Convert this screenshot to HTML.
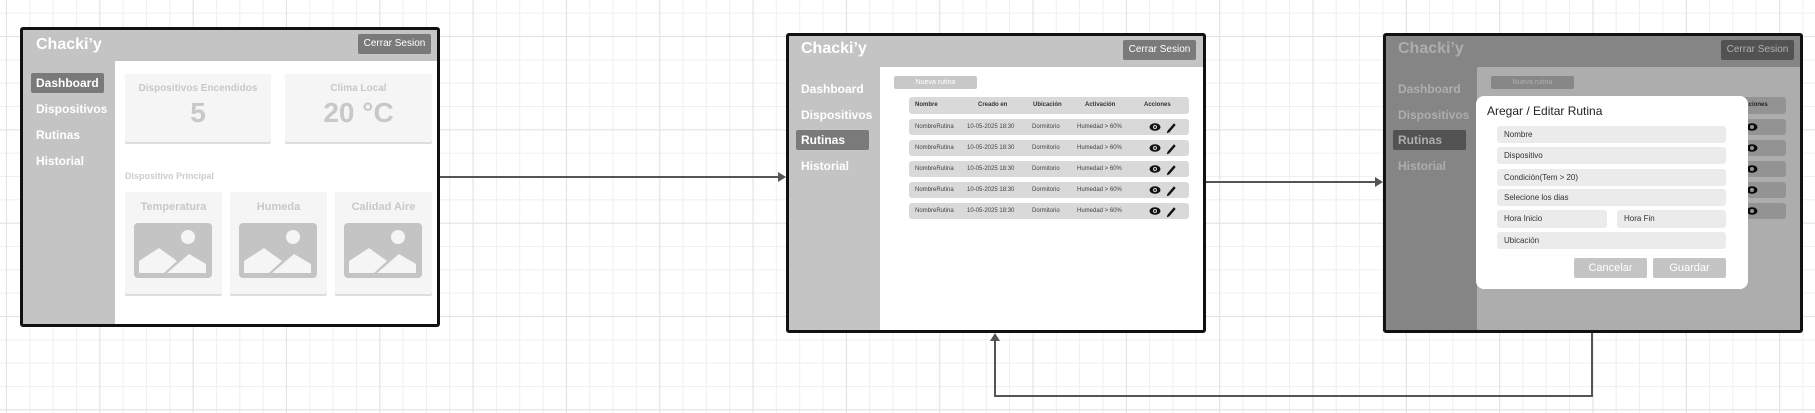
<!DOCTYPE html>
<html><head><meta charset="utf-8"><style>
*{margin:0;padding:0;box-sizing:border-box}
body{width:1815px;height:413px;overflow:hidden;position:relative;font-family:"Liberation Sans",sans-serif;
background-color:#fff;
background-image:
linear-gradient(90deg,#e2e2e2 1px,transparent 1px),
linear-gradient(0deg,#e2e2e2 1px,transparent 1px),
linear-gradient(90deg,#efefef 1px,transparent 1px),
linear-gradient(0deg,#efefef 1px,transparent 1px);
background-size:93.33px 93.33px,93.33px 93.33px,23.33px 23.33px,23.33px 23.33px;
background-position:6px 0,0 37px,6px 0,0 37px;}
.a{position:absolute}
.frame{position:absolute;border:3px solid #111;border-radius:3px;overflow:hidden;background:#fff}
.hdr{position:absolute;left:0;top:0;right:0;background:#c4c4c4}
.side{position:absolute;left:0;bottom:0;background:#c4c4c4}
.logo{position:absolute;color:#fff;font-weight:bold;font-size:16px}
.btn{position:absolute;background:#7a7a7a;color:#fff;font-size:10px;text-align:center;border-radius:2px}
.nav{position:absolute;color:#fff;font-size:12px;font-weight:bold}
.navact{position:absolute;background:#7a7a7a;border-radius:2px}
.card{position:absolute;background:#f5f5f5;box-shadow:0 2px 0 #ddd;border-radius:2px;text-align:center;color:#c8c8c8;font-weight:bold}
.img{position:absolute;left:9px;top:31px;width:78px;height:55px;background:#c4c4c4;border-radius:4px}
.row{position:absolute;left:120px;width:280px;height:16px;background:#d9d9d9;border-radius:3px;font-size:6px;color:#444}
.row span{position:absolute;top:5px;white-space:nowrap}
.fld{position:absolute;background:#ebebeb;border-radius:3px;font-size:8px;color:#333;padding-left:7px;line-height:17px}
</style></head><body>

<!-- arrows -->
<div class="a" style="left:440px;top:176px;width:340px;height:2px;background:#555"></div>
<div class="a" style="left:778px;top:172px;width:0;height:0;border-left:8px solid #555;border-top:5px solid transparent;border-bottom:5px solid transparent"></div>
<div class="a" style="left:1205px;top:181px;width:172px;height:2px;background:#555"></div>
<div class="a" style="left:1375px;top:177px;width:0;height:0;border-left:8px solid #555;border-top:5px solid transparent;border-bottom:5px solid transparent"></div>
<div class="a" style="left:1591px;top:332px;width:2px;height:65px;background:#555"></div>
<div class="a" style="left:994px;top:395px;width:599px;height:2px;background:#555"></div>
<div class="a" style="left:994px;top:340px;width:2px;height:57px;background:#555"></div>
<div class="a" style="left:990px;top:333px;width:0;height:0;border-bottom:8px solid #555;border-left:5px solid transparent;border-right:5px solid transparent"></div>

<!-- Frame 1 -->
<div class="frame" style="left:20px;top:27px;width:420px;height:300px">
 <div class="hdr" style="height:31px"></div>
 <div class="side" style="top:31px;width:92px"></div>
 <div class="logo" style="left:13px;top:6px">Chacki’y</div>
 <div class="btn" style="left:335px;top:4px;width:73px;height:20px;line-height:20px">Cerrar Sesion</div>
 <div class="navact" style="left:8px;top:43px;width:73px;height:20px"></div>
 <div class="nav" style="left:13px;top:46px">Dashboard</div>
 <div class="nav" style="left:13px;top:72px">Dispositivos</div>
 <div class="nav" style="left:13px;top:98px">Rutinas</div>
 <div class="nav" style="left:13px;top:124px">Historial</div>
 <div class="card" style="left:102px;top:44px;width:146px;height:68px"><div style="font-size:10px;margin-top:9px">Dispositivos Encendidos</div><div style="font-size:28px;margin-top:3px">5</div></div>
 <div class="card" style="left:262px;top:44px;width:147px;height:68px"><div style="font-size:10px;margin-top:9px">Clima Local</div><div style="font-size:28px;margin-top:3px">20 °C</div></div>
 <div class="a" style="left:102px;top:141px;font-size:9px;font-weight:bold;color:#ccc">Dispositivo Principal</div>
 <div class="card" style="left:102px;top:162px;width:97px;height:102px"><div style="font-size:11px;margin-top:9px">Temperatura</div><div class="img"></div></div>
 <div class="card" style="left:207px;top:162px;width:97px;height:102px"><div style="font-size:11px;margin-top:9px">Humeda</div><div class="img"></div></div>
 <div class="card" style="left:312px;top:162px;width:97px;height:102px"><div style="font-size:11px;margin-top:9px">Calidad Aire</div><div class="img"></div></div>
</div>
<svg class="a" style="left:0;top:0" width="460" height="330">
 <g fill="#f5f5f5">
  <g transform="translate(134,223)"><circle cx="54" cy="14" r="7"/><polygon points="5,50 5,38 25,25 43,38 30,50"/><polygon points="33,50 55,31 72,41 72,50"/></g>
  <g transform="translate(239,223)"><circle cx="54" cy="14" r="7"/><polygon points="5,50 5,38 25,25 43,38 30,50"/><polygon points="33,50 55,31 72,41 72,50"/></g>
  <g transform="translate(344,223)"><circle cx="54" cy="14" r="7"/><polygon points="5,50 5,38 25,25 43,38 30,50"/><polygon points="33,50 55,31 72,41 72,50"/></g>
 </g>
</svg>

<!-- Frame 2 -->
<div class="frame" style="left:786px;top:33px;width:420px;height:300px">
 <div class="hdr" style="height:31px"></div>
 <div class="side" style="top:31px;width:91px"></div>
 <div class="logo" style="left:12px;top:4px">Chacki’y</div>
 <div class="btn" style="left:334px;top:4px;width:73px;height:20px;line-height:20px">Cerrar Sesion</div>
 <div class="navact" style="left:7px;top:94px;width:73px;height:20px"></div>
 <div class="nav" style="left:12px;top:46px">Dashboard</div>
 <div class="nav" style="left:12px;top:72px">Dispositivos</div>
 <div class="nav" style="left:12px;top:97px">Rutinas</div>
 <div class="nav" style="left:12px;top:123px">Historial</div>
 <div class="a" style="left:105px;top:40px;width:83px;height:13px;background:#c8c8c8;border-radius:2px;color:#fff;font-size:7px;text-align:center;line-height:13px">Nueva rutina</div>
 <div class="row" style="top:61px;height:17px;font-weight:bold;color:#333"><span style="left:6px;top:5px">Nombre</span><span style="left:69px;top:5px">Creado en</span><span style="left:124px;top:5px">Ubicación</span><span style="left:176px;top:5px">Activación</span><span style="left:235px;top:5px">Acciones</span></div>
 <div class="row" style="top:83px"><span style="left:6px">NombreRutina</span><span style="left:58px">10-05-2025 18:30</span><span style="left:123px">Dormitorio</span><span style="left:168px">Humedad &gt; 60%</span></div>
 <div class="row" style="top:104px"><span style="left:6px">NombreRutina</span><span style="left:58px">10-05-2025 18:30</span><span style="left:123px">Dormitorio</span><span style="left:168px">Humedad &gt; 60%</span></div>
 <div class="row" style="top:125px"><span style="left:6px">NombreRutina</span><span style="left:58px">10-05-2025 18:30</span><span style="left:123px">Dormitorio</span><span style="left:168px">Humedad &gt; 60%</span></div>
 <div class="row" style="top:146px"><span style="left:6px">NombreRutina</span><span style="left:58px">10-05-2025 18:30</span><span style="left:123px">Dormitorio</span><span style="left:168px">Humedad &gt; 60%</span></div>
 <div class="row" style="top:167px"><span style="left:6px">NombreRutina</span><span style="left:58px">10-05-2025 18:30</span><span style="left:123px">Dormitorio</span><span style="left:168px">Humedad &gt; 60%</span></div>
 <svg class="a" style="left:0;top:0" width="420" height="300">
  <defs><g id="ic"><ellipse cx="0" cy="0" rx="5.5" ry="3.8" fill="#111"/><circle cx="0" cy="0" r="2" fill="#d9d9d9"/><circle cx="0" cy="0" r="1" fill="#111"/><path d="M13 4 L19 -3 L20 -2 L14 5 L12.5 5.5 Z" fill="#111" stroke="#111" stroke-width="1"/></g></defs>
  <use href="#ic" x="366" y="91"/><use href="#ic" x="366" y="112"/><use href="#ic" x="366" y="133"/><use href="#ic" x="366" y="154"/><use href="#ic" x="366" y="175"/>
 </svg>
</div>

<!-- Frame 3 -->
<div class="frame" style="left:1383px;top:33px;width:420px;height:300px">
 <div class="hdr" style="height:31px"></div>
 <div class="side" style="top:31px;width:91px"></div>
 <div class="logo" style="left:12px;top:4px">Chacki’y</div>
 <div class="btn" style="left:335px;top:4px;width:73px;height:20px;line-height:20px">Cerrar Sesion</div>
 <div class="navact" style="left:7px;top:94px;width:73px;height:20px"></div>
 <div class="nav" style="left:12px;top:46px">Dashboard</div>
 <div class="nav" style="left:12px;top:72px">Dispositivos</div>
 <div class="nav" style="left:12px;top:97px">Rutinas</div>
 <div class="nav" style="left:12px;top:123px">Historial</div>
 <div class="a" style="left:105px;top:40px;width:83px;height:13px;background:#c8c8c8;border-radius:2px;color:#fff;font-size:7px;text-align:center;line-height:13px">Nueva rutina</div>
 <div class="row" style="top:61px;height:17px;font-weight:bold;color:#333"><span style="left:235px;top:5px">Acciones</span></div>
 <div class="row" style="top:83px"></div><div class="row" style="top:104px"></div><div class="row" style="top:125px"></div><div class="row" style="top:146px"></div><div class="row" style="top:167px"></div>
 <svg class="a" style="left:0;top:0" width="420" height="300">
  <g fill="#111"><ellipse cx="366" cy="91" rx="5.5" ry="3.8"/><ellipse cx="366" cy="112" rx="5.5" ry="3.8"/><ellipse cx="366" cy="133" rx="5.5" ry="3.8"/><ellipse cx="366" cy="154" rx="5.5" ry="3.8"/><ellipse cx="366" cy="175" rx="5.5" ry="3.8"/></g>
  <g fill="#d9d9d9"><circle cx="366" cy="91" r="2"/><circle cx="366" cy="112" r="2"/><circle cx="366" cy="133" r="2"/><circle cx="366" cy="154" r="2"/><circle cx="366" cy="175" r="2"/></g>
 </svg>
 <div class="a" style="left:0;top:0;right:0;bottom:0;background:rgba(0,0,0,0.32)"></div>
 <div class="a" style="left:90px;top:60px;width:272px;height:193px;background:#fff;border-radius:8px">
  <div class="a" style="left:11px;top:8px;font-size:12px;color:#222">Aregar / Editar Rutina</div>
  <div class="fld" style="left:21px;top:30px;width:229px;height:17px">Nombre</div>
  <div class="fld" style="left:21px;top:51px;width:229px;height:17px">Dispositivo</div>
  <div class="fld" style="left:21px;top:73px;width:229px;height:17px">Condición(Tem &gt; 20)</div>
  <div class="fld" style="left:21px;top:93px;width:229px;height:17px">Selecione los dias</div>
  <div class="fld" style="left:21px;top:114px;width:110px;height:18px">Hora Inicio</div>
  <div class="fld" style="left:141px;top:114px;width:109px;height:18px">Hora Fin</div>
  <div class="fld" style="left:21px;top:136px;width:229px;height:17px">Ubicación</div>
  <div class="a" style="left:98px;top:162px;width:73px;height:20px;background:#c4c4c4;color:#fff;font-size:11px;text-align:center;line-height:20px;border-radius:2px">Cancelar</div>
  <div class="a" style="left:177px;top:162px;width:73px;height:20px;background:#c4c4c4;color:#fff;font-size:11px;text-align:center;line-height:20px;border-radius:2px">Guardar</div>
 </div>
</div>
</body></html>
